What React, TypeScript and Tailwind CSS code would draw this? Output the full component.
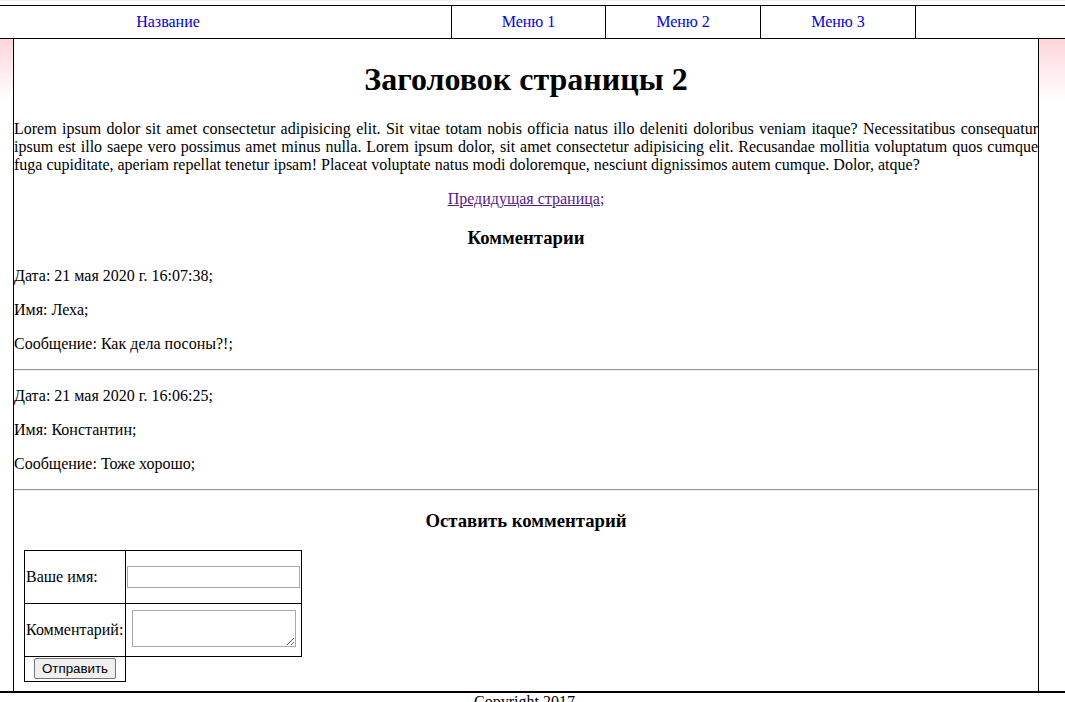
const comments = [
  { date: '21 мая 2020 г. 16:07:38', name: 'Леха', text: 'Как дела посоны?!' },
  { date: '21 мая 2020 г. 16:06:25', name: 'Константин', text: 'Тоже хорошо' },
];

const menu = ['Меню 1', 'Меню 2', 'Меню 3'];

export default function App() {
  return (
    <div className="h-[702px] overflow-hidden bg-white font-['Liberation_Serif',serif] text-base leading-[normal] text-black">
      <div className="h-[5px] border-t border-[#f2f2f2]" />

      <nav className="flex h-[34px] border-y border-black bg-white">
        <div className="flex w-[452px] items-center border-r border-black">
          <a href="#" className="block w-[336px] text-center text-[#0000ee]">
            Название
          </a>
        </div>
        {menu.map((item, i) => (
          <div
            key={item}
            className={
              i === 0
                ? 'flex w-[154px] items-center justify-center border-r border-black'
                : 'flex w-[155px] items-center justify-center border-r border-black'
            }
          >
            <a href="#" className="text-[#0000ee]">
              {item}
            </a>
          </div>
        ))}
        <div className="flex-1" />
      </nav>

      <div className="flex bg-[linear-gradient(to_bottom,#ffd5db,#ffffff_62px)]">
        <main className="ml-[13px] mr-[26px] flex-1 border-x border-black bg-white pt-px pb-[9px]">
          <h1 className="my-[21.44px] text-center text-[32px] font-bold">Заголовок страницы 2</h1>
          <p className="my-4 text-justify">
            Lorem ipsum dolor sit amet consectetur adipisicing elit. Sit vitae totam nobis officia natus illo
            deleniti doloribus veniam itaque? Necessitatibus consequatur ipsum est illo saepe vero possimus amet
            minus nulla. Lorem ipsum dolor, sit amet consectetur adipisicing elit. Recusandae mollitia voluptatum
            quos cumque fuga cupiditate, aperiam repellat tenetur ipsam! Placeat voluptate natus modi doloremque,
            nesciunt dignissimos autem cumque. Dolor, atque?
          </p>
          <p className="my-4 text-center text-[#551a8b]">
            <a href="#" className="underline">
              Предидущая страница
            </a>
            ;
          </p>

          <h3 className="my-[18.72px] text-center text-[18.72px] font-bold">Комментарии</h3>
          {comments.map((c) => (
            <div key={c.date}>
              <p className="my-4">Дата: {c.date};</p>
              <p className="my-4">Имя: {c.name};</p>
              <p className="my-4">Сообщение: {c.text};</p>
              <hr className="my-4 border-t border-b border-t-[#9a9a9a] border-b-[#eeeeee]" />
            </div>
          ))}

          <h3 className="mt-[18.72px] mb-[17.72px] text-center text-[18.72px] font-bold">Оставить комментарий</h3>
          <form className="ml-[10px] w-[278px]" onSubmit={(e) => e.preventDefault()}>
            <div className="flex h-[54px] border border-black">
              <label className="flex w-[101px] items-center border-r border-black pl-px">Ваше имя:</label>
              <div className="flex flex-1 items-center justify-center">
                <input
                  type="text"
                  className="h-[22px] w-[173px] border border-[#a9a9a9] bg-white px-[2px] outline-none"
                />
              </div>
            </div>
            <div className="flex h-[53px] border-x border-b border-black">
              <label className="flex w-[101px] items-center border-r border-black pl-px">Комментарий:</label>
              <div className="flex flex-1 items-start justify-center pt-[6px]">
                <textarea className="h-[37px] w-[164px] border border-[#a9a9a9] bg-white outline-none" />
              </div>
            </div>
            <div className="flex h-[25px] w-[102px] items-center justify-center border-x border-b border-black">
              <button
                type="submit"
                className="h-[21px] w-[82px] rounded-[2px] border border-[#767676] bg-[#efefef] font-['Liberation_Sans',Arial,sans-serif] text-[13.33px]"
              >
                Отправить
              </button>
            </div>
          </form>
        </main>
      </div>

      <footer className="border-t-2 border-black pr-[16px] text-center">Copyright 2017</footer>
    </div>
  );
}
